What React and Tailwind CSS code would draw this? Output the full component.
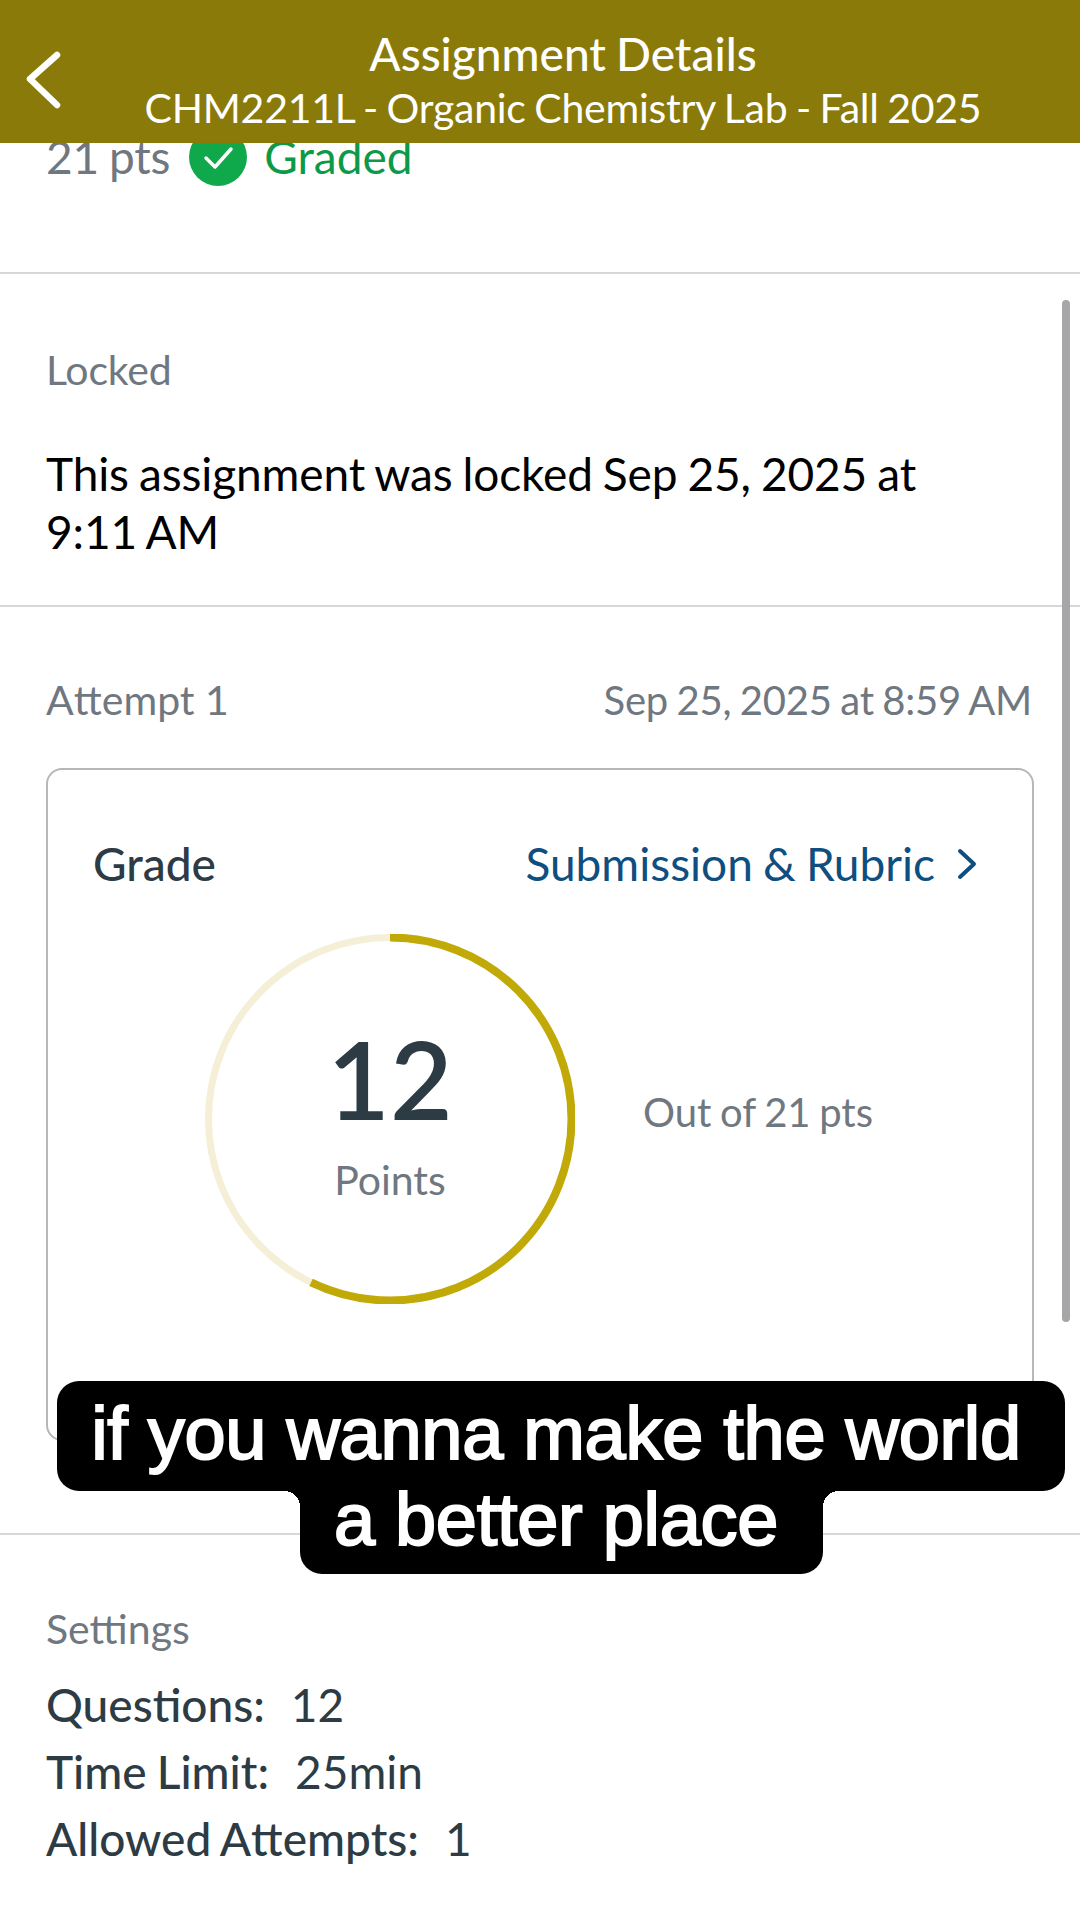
import React from 'react';

const font = { fontFamily: 'Lato, sans-serif' };

// the reference only joins "ti" and "tt", so the ligature is turned on just for those letters
const Lig = ({ children }) => (
  <span className="[font-variant-ligatures:common-ligatures_discretionary-ligatures]">{children}</span>
);

const ScoreRing = ({ score, total }) => {
  const radius = 181.5;
  const circumference = 2 * Math.PI * radius;
  const filled = (score / total) * circumference;

  return (
    <div className="relative h-[370px] w-[370px] shrink-0">
      <svg className="absolute inset-0" width="370" height="370" viewBox="0 0 370 370" fill="none">
        <circle cx="185" cy="185" r={radius} stroke="#f4efd6" strokeWidth="7" />
        <circle
          cx="185"
          cy="185"
          r={radius}
          stroke="#c1a908"
          strokeWidth="8"
          strokeDasharray={`${filled} ${circumference}`}
          transform="rotate(-90 185 185)"
        />
      </svg>
      <div className="absolute inset-0 flex flex-col items-center pt-[84px]">
        <div className="text-[108px] leading-[120px] font-semibold tabular-nums text-[#2d3b45]">{score}</div>
        <div className="mt-[19px] text-[41px] leading-[46px] text-[#6f7780]">Points</div>
      </div>
    </div>
  );
};

const SettingRow = ({ label, value }) => (
  <div className="text-[46px] leading-[67px] text-[#2d3b45]">
    <span className="font-medium">{label}:</span>
    <span className="ml-[26px]">{value}</span>
  </div>
);

export default function App() {
  return (
    <div className="relative h-[1920px] w-[1080px] overflow-hidden bg-white [word-spacing:-0.1em]" style={font}>
      <header className="relative z-10 flex h-[143px] items-center justify-center bg-[#8a7a0a] pl-[46px] text-white">
        <svg className="absolute left-[24px] top-[50px]" width="40" height="60" viewBox="0 0 40 60" fill="none">
          <path d="M33 5 L6 29 L33 55" stroke="white" strokeWidth="6.5" strokeLinecap="round" strokeLinejoin="round" />
        </svg>
        <div className="flex flex-col items-center pt-[18px]">
          <div className="text-[46px] leading-[54px] font-medium">Assignment Details</div>
          <div className="text-[41px] leading-[54px] tracking-[-0.25px]">CHM2211L - Organic Chemistry Lab - Fall 2025</div>
        </div>
      </header>

      <div className="-mt-[15px] flex h-[146px] items-start border-b-2 border-[#d5d8da] pl-[46px]">
        <div className="flex items-center">
          <span className="text-[46px] leading-[50px] tracking-[-0.2px] text-[#6f7780]">21 pts</span>
          <span className="ml-[19px] flex h-[58px] w-[58px] items-center justify-center rounded-full bg-[#0fa84a]">
            <svg width="58" height="58" viewBox="0 0 58 58" fill="none">
              <path d="M17 30 L26 39 L42 21" stroke="white" strokeWidth="3.5" strokeLinecap="round" strokeLinejoin="round" />
            </svg>
          </span>
          <span className="ml-[17px] text-[46px] leading-[50px] text-[#0c9a48]">Graded</span>
        </div>
      </div>

      <section className="h-[333px] border-b-2 border-[#d5d8da] px-[46px] pt-[73px]">
        <div className="text-[41px] leading-[46px] tracking-[-0.2px] text-[#6f7780]">Locked</div>
        <p className="mt-[52px] w-[900px] text-[46px] leading-[58px] tracking-[-0.12px] text-black">
          This assignment was locked Sep 25, 2025 at 9:11 AM
        </p>
      </section>

      <section className="h-[928px] border-b-2 border-[#d5d8da] pl-[46px] pr-[46px] pt-[70px]">
        <div className="flex items-center justify-between pr-[2px] text-[40px] leading-[46px] text-[#6f7780]">
          <span className="text-[41px] [word-spacing:0]">
            A<Lig>tt</Lig>empt 1
          </span>
          <span className="tracking-[-0.2px]">Sep 25, 2025 at 8:59 AM</span>
        </div>

        <div className="mt-[45px] h-[673px] w-[988px] rounded-[16px] border-2 border-[#b4b8bb] pl-[45px] pr-[53px] pt-[68px]">
          <div className="flex items-center justify-between">
            <span className="text-[46px] leading-[52px] font-medium text-[#2d3b45]">Grade</span>
            <span className="flex items-center text-[46px] leading-[52px] text-[#0f4f7f]">
              Submission &amp; Rubric
              <svg className="ml-[20px]" width="24" height="36" viewBox="0 0 24 36" fill="none">
                <path d="M5 5 L19 18 L5 31" stroke="#0f4f7f" strokeWidth="4" strokeLinecap="round" strokeLinejoin="round" />
              </svg>
            </span>
          </div>
          <div className="mt-[44px] flex items-center pl-[112px]">
            <ScoreRing score={12} total={21} />
            <span className="ml-[68px] mb-[14px] text-[40px] leading-[46px] text-[#6f7780]">Out of 21 pts</span>
          </div>
        </div>
      </section>

      <section className="px-[46px] pt-[71px]">
        <div className="text-[41px] leading-[46px] text-[#6f7780]">Settings</div>
        <div className="mt-[19px]">
          <SettingRow
            label={
              <>
                Ques<Lig>ti</Lig>ons
              </>
            }
            value="12"
          />
          <SettingRow label="Time Limit" value="25min" />
          <SettingRow
            label={
              <>
                Allowed A<Lig>tt</Lig>empts
              </>
            }
            value="1"
          />
        </div>
      </section>

      <div className="absolute right-[10px] top-[300px] h-[1022px] w-[8px] rounded-full bg-[#a6a6a8]" />

      <div className="absolute left-[57px] top-[1381px] flex w-[1008px] flex-col items-center font-['Liberation_Sans',sans-serif] text-[74px] tracking-[-0.3px] text-white [word-spacing:0] [-webkit-text-stroke:2px_white]">
        <div className="flex h-[110px] w-full items-center justify-center rounded-[22px] bg-black pb-[6px] pr-[10px]">if you wanna make the world</div>
        <div className="relative flex h-[83px] w-[523px] items-center justify-center rounded-b-[22px] bg-black pb-[26px] pr-[10px]">
          a better place
          <span className="absolute -left-[16px] top-0 h-[16px] w-[16px] bg-[radial-gradient(circle_at_0_100%,transparent_16px,black_16px)]" />
          <span className="absolute -right-[16px] top-0 h-[16px] w-[16px] bg-[radial-gradient(circle_at_100%_100%,transparent_16px,black_16px)]" />
        </div>
      </div>
    </div>
  );
}
